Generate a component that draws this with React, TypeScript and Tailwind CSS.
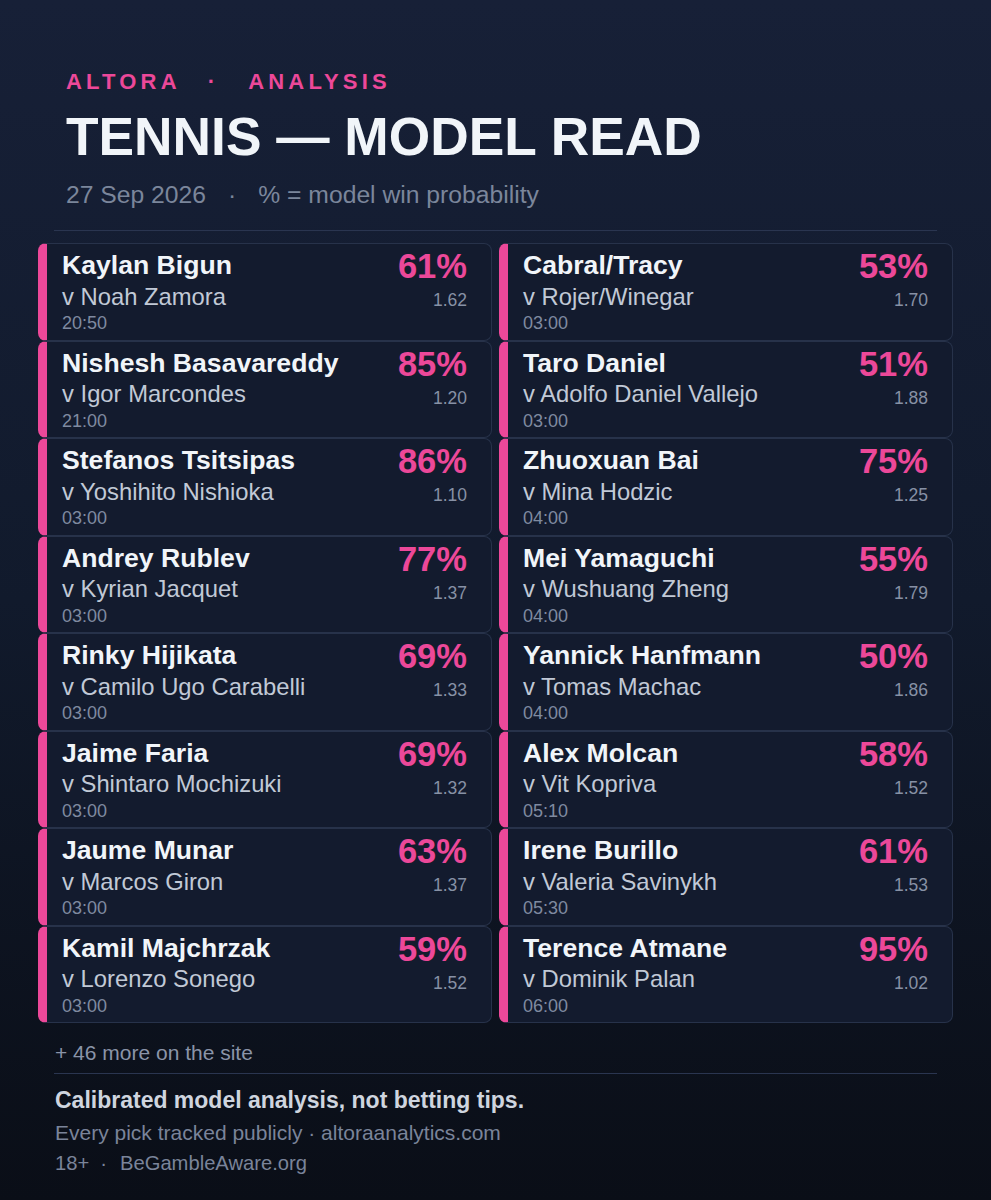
import React from "react";

type Pick = {
  player: string;
  opponent: string;
  time: string;
  prob: number;
  odds: string;
};

const leftPicks: Pick[] = [
  { player: "Kaylan Bigun", opponent: "Noah Zamora", time: "20:50", prob: 61, odds: "1.62" },
  { player: "Nishesh Basavareddy", opponent: "Igor Marcondes", time: "21:00", prob: 85, odds: "1.20" },
  { player: "Stefanos Tsitsipas", opponent: "Yoshihito Nishioka", time: "03:00", prob: 86, odds: "1.10" },
  { player: "Andrey Rublev", opponent: "Kyrian Jacquet", time: "03:00", prob: 77, odds: "1.37" },
  { player: "Rinky Hijikata", opponent: "Camilo Ugo Carabelli", time: "03:00", prob: 69, odds: "1.33" },
  { player: "Jaime Faria", opponent: "Shintaro Mochizuki", time: "03:00", prob: 69, odds: "1.32" },
  { player: "Jaume Munar", opponent: "Marcos Giron", time: "03:00", prob: 63, odds: "1.37" },
  { player: "Kamil Majchrzak", opponent: "Lorenzo Sonego", time: "03:00", prob: 59, odds: "1.52" },
];

const rightPicks: Pick[] = [
  { player: "Cabral/Tracy", opponent: "Rojer/Winegar", time: "03:00", prob: 53, odds: "1.70" },
  { player: "Taro Daniel", opponent: "Adolfo Daniel Vallejo", time: "03:00", prob: 51, odds: "1.88" },
  { player: "Zhuoxuan Bai", opponent: "Mina Hodzic", time: "04:00", prob: 75, odds: "1.25" },
  { player: "Mei Yamaguchi", opponent: "Wushuang Zheng", time: "04:00", prob: 55, odds: "1.79" },
  { player: "Yannick Hanfmann", opponent: "Tomas Machac", time: "04:00", prob: 50, odds: "1.86" },
  { player: "Alex Molcan", opponent: "Vit Kopriva", time: "05:10", prob: 58, odds: "1.52" },
  { player: "Irene Burillo", opponent: "Valeria Savinykh", time: "05:30", prob: 61, odds: "1.53" },
  { player: "Terence Atmane", opponent: "Dominik Palan", time: "06:00", prob: 95, odds: "1.02" },
];

function PickCard({ pick }: { pick: Pick }) {
  return (
    <div className="box-border flex h-[97.5px] justify-between rounded-lg border border-l-[9px] border-[#27324a] border-l-[#ec4899] bg-[#131b2e] pl-[15px] pr-[24px] pt-[8px]">
      <div className="flex flex-col">
        <div className="text-[26.6px] font-bold leading-[26px] text-[#f1f5f9]">
          {pick.player}
        </div>
        <div className="mt-[6.5px] text-[23.8px] leading-[24px] text-[#c1c9d6]">
          v {pick.opponent}
        </div>
        <div className="mt-[5.5px] text-[18px] leading-[18px] text-[#7f8aa0]">
          {pick.time}
        </div>
      </div>
      <div className="-mt-[3px] flex flex-col items-end">
        <div className="text-[34.5px] font-bold leading-[34px] text-[#ec4899]">
          {pick.prob}%
        </div>
        <div className="mt-[9px] text-[17.5px] leading-[17px] text-[#8791a5]">
          {pick.odds}
        </div>
      </div>
    </div>
  );
}

export default function App() {
  return (
    <div
      className="min-h-[1200px] w-full bg-gradient-to-b from-[#172037] via-[#111a2c] to-[#0a0e17] px-[38px] pt-[71px]"
      style={{ fontFamily: '"Liberation Sans", Arial, sans-serif' }}
    >
      {/* header */}
      <header className="px-[28px]">
        <div className="flex text-[22px] font-bold leading-[22px] tracking-[0.19em] text-[#ec4899]">
          <span>ALTORA</span>
          <span className="ml-[27px] mr-[29px]">·</span>
          <span>ANALYSIS</span>
        </div>
        <h1 className="mt-[17px] text-[53.3px] font-bold leading-[53px] text-[#f1f5f9]">
          TENNIS — MODEL READ
        </h1>
        <div className="mt-[19px] flex text-[24.7px] leading-[25px] text-[#7b869b]">
          <span>27 Sep 2026</span>
          <span className="mx-[22px]">·</span>
          <span>% = model win probability</span>
        </div>
      </header>

      <div className="mx-[16px] mt-[23px] h-px bg-[#2a3550]" />

      <main className="mt-[12px] grid grid-cols-2 gap-x-[7px]">
        <div className="flex flex-col">
          {leftPicks.map((p) => (
            <PickCard key={p.player} pick={p} />
          ))}
        </div>
        <div className="flex flex-col">
          {rightPicks.map((p) => (
            <PickCard key={p.player} pick={p} />
          ))}
        </div>
      </main>

      {/* footer */}
      <footer className="px-[16px]">
        <div className="mt-[19px] pl-px text-[21px] leading-[21px] text-[#8a94a8]">
          + 46 more on the site
        </div>
        <div className="mt-[10px] h-px bg-[#2a3550]" />
        <div className="mt-[14.5px] pl-px text-[23px] font-bold leading-[23px] text-[#cfd5df]">
          Calibrated model analysis, not betting tips.
        </div>
        <div className="mt-[10px] pl-px text-[21px] leading-[21px] text-[#7a849a]">
          Every pick tracked publicly · altoraanalytics.com
        </div>
        <div className="mt-[10px] flex pl-px text-[20.2px] leading-[21px] text-[#7a849a]">
          <span>18+</span>
          <span className="ml-[11px] mr-[13px]">·</span>
          <span>BeGambleAware.org</span>
        </div>
      </footer>
    </div>
  );
}
